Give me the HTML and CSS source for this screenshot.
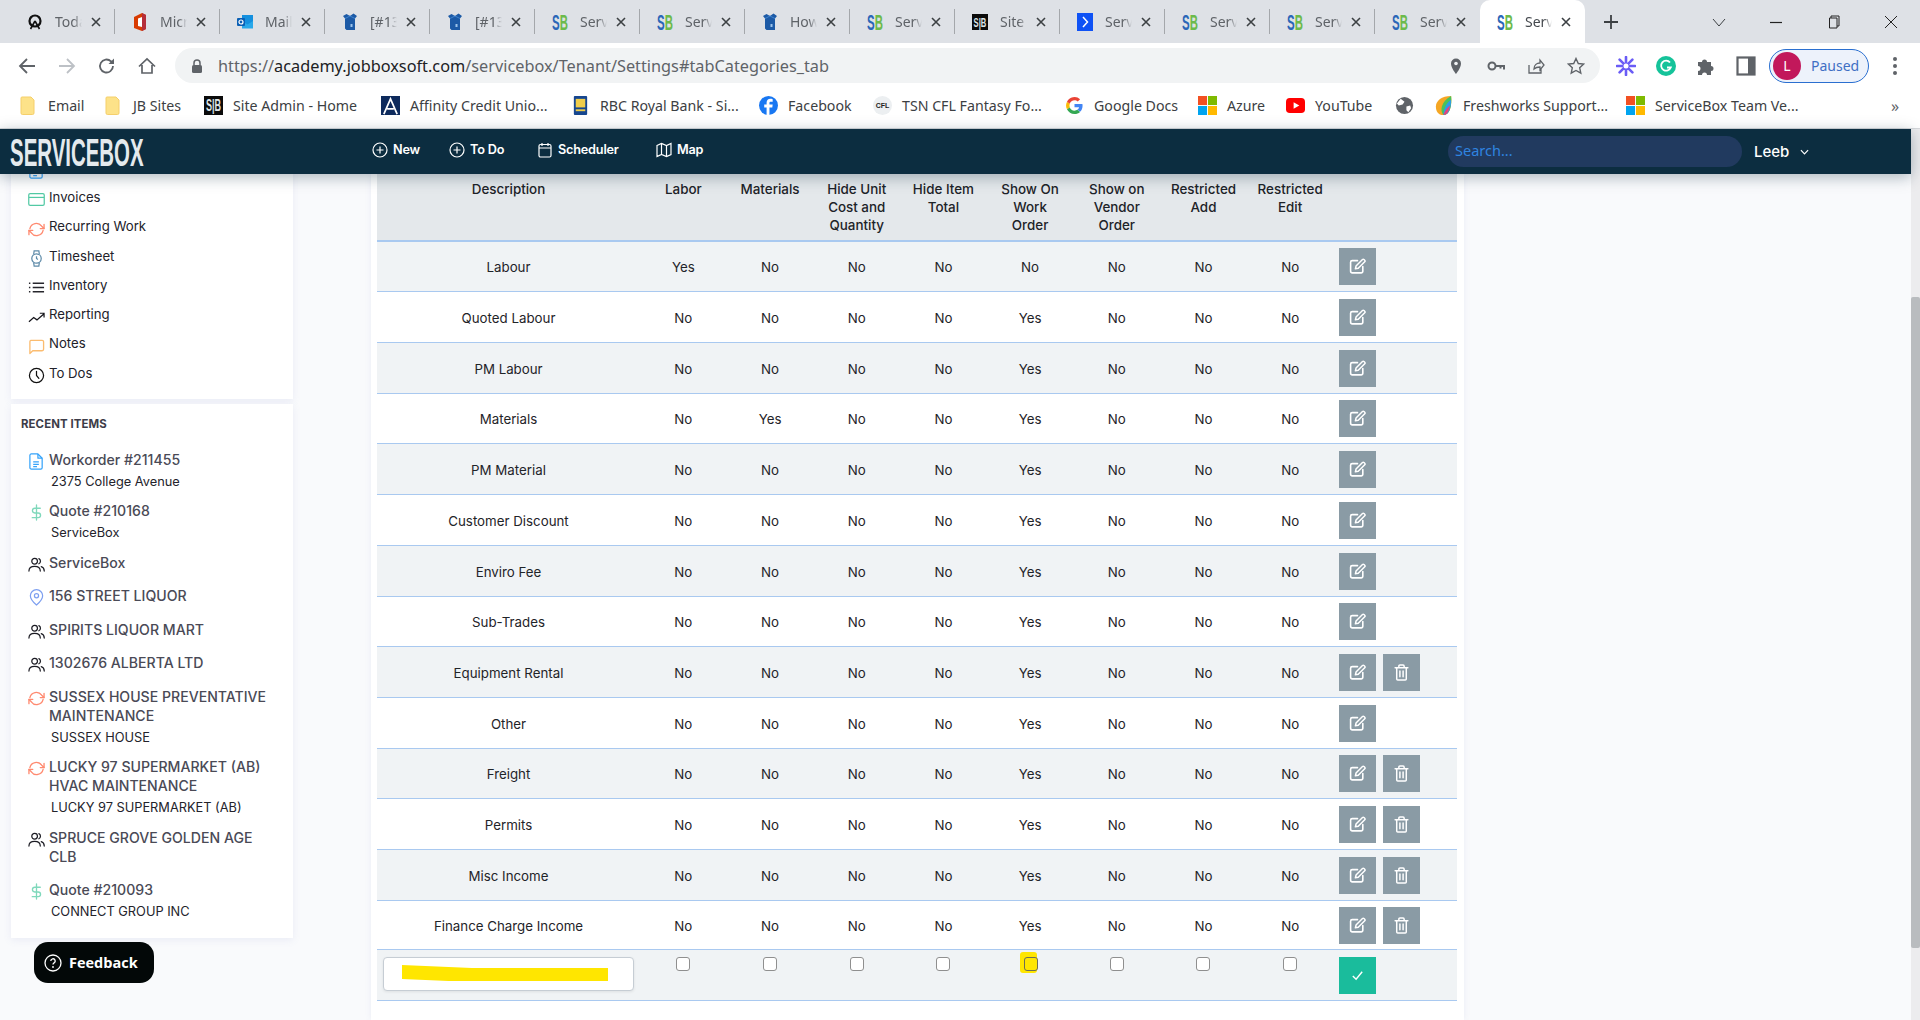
FILE: index.html
```html
<!DOCTYPE html>
<html lang="en">
<head>
<meta charset="utf-8">
<title>ServiceBox - Settings</title>
<link rel="stylesheet" href="styles.css">
</head>
<body>
<svg class="sprite" xmlns="http://www.w3.org/2000/svg">
  <symbol id="i-close" viewBox="0 0 10 10"><path d="M1 1l8 8M9 1l-8 8" fill="none" stroke="currentColor" stroke-width="1.6"/></symbol>
  <symbol id="i-box" viewBox="0 0 16 18"><path d="M1 3l3.500-2 3.500 2 3.500-2.500L15 3l-2 2.500V17H4.500L3 15.500V5.500z" fill="#1c5aa6"/><path d="M3 5.500L8 3l5 2.500" fill="none" stroke="#3f83cf"/><rect x="8.500" y="11" width="2" height="3" fill="#9cc3ea"/></symbol>
  <symbol id="i-edit" viewBox="0 0 16 16"><path d="M8 2.500H3a1.500 1.500 0 0 0-1.500 1.500v8.500A1.500 1.500 0 0 0 3 14h8.500a1.500 1.500 0 0 0 1.500-1.500V8" fill="none" stroke="currentColor" stroke-width="1.500" stroke-linecap="round"/><path d="M6 10.200l.6-2.600 6.100-6.100a1 1 0 0 1 1.400 0l.7.700a1 1 0 0 1 0 1.400L8.700 9.700z" fill="none" stroke="currentColor" stroke-width="1.400" stroke-linejoin="round"/></symbol>
  <symbol id="i-trash" viewBox="0 0 16 16"><path d="M2 3.500h12M5.500 3.500V2a1 1 0 0 1 1-1h3a1 1 0 0 1 1 1v1.500M3.500 3.500V14a1 1 0 0 0 1 1h7a1 1 0 0 0 1-1V3.500M6.500 6.500V12M9.500 6.500V12" fill="none" stroke="currentColor" stroke-width="1.400" stroke-linecap="round"/></symbol>
  <symbol id="i-users" viewBox="0 0 18 18"><g fill="none" stroke="#1c1c24" stroke-width="1.300" stroke-linecap="round"><circle cx="7" cy="5.500" r="3"/><path d="M1 16c0-3 2-5 6-5s6 2 6 5"/><path d="M11.500 2.800a3 3 0 0 1 0 5.400M14 11.300c2 .6 3.200 2.300 3.200 4.700"/></g></symbol>
  <symbol id="i-doc" viewBox="0 0 18 18"><g fill="none" stroke="#35a3fa" stroke-width="1.300" stroke-linejoin="round"><path d="M3.500 1h7l4.500 4.500V15.500a1.500 1.500 0 0 1-1.500 1.500h-10A1.500 1.500 0 0 1 2 15.500v-13A1.500 1.500 0 0 1 3.500 1z"/><path d="M10.500 1v4.500H15M5.500 9.500h6M5.500 12h6M5.500 14.500h4"/></g></symbol>
  <symbol id="i-dollar" viewBox="0 0 18 18"><path d="M9 1v16M13 4.500H7.200a2.500 2.500 0 0 0 0 5h3.600a2.500 2.500 0 0 1 0 5H4.500" fill="none" stroke="#7fd8bb" stroke-width="1.400" stroke-linecap="round"/></symbol>
  <symbol id="i-pin" viewBox="0 0 18 18"><path d="M9 17S2.500 11.500 2.500 7.200a6.500 6.500 0 0 1 13 0C15.500 11.500 9 17 9 17z" fill="none" stroke="#7d9ff0" stroke-width="1.300"/><circle cx="9" cy="7.200" r="2.200" fill="none" stroke="#7d9ff0" stroke-width="1.300"/></symbol>
  <symbol id="i-sync" viewBox="0 0 18 18"><g fill="none" stroke="#ff8a70" stroke-width="1.400" stroke-linecap="round" stroke-linejoin="round"><path d="M2 8a7 7 0 0 1 12.500-2.500L17 8"/><path d="M17 3.500V8h-4"/><path d="M16 10a7 7 0 0 1-12.500 2.500L1 10"/><path d="M1 14.500V10h4"/></g></symbol>
  <symbol id="i-card" viewBox="0 0 18 14"><rect x=".8" y=".8" width="16.400" height="12.400" rx="1.500" fill="none" stroke="#52c9a4" stroke-width="1.300"/><path d="M1 4.800h16" stroke="#52c9a4" stroke-width="1.300"/></symbol>
  <symbol id="i-watch" viewBox="0 0 18 18"><g fill="none" stroke="#5d8aa8" stroke-width="1.300"><circle cx="9" cy="9" r="5"/><path d="M6 4.500L6.500 1h5l.5 3.500M6 13.500L6.500 17h5l.5-3.500M9 6.500V9l1.500 1"/></g></symbol>
  <symbol id="i-list" viewBox="0 0 18 18"><path d="M5 4.500h12M5 9h12M5 13.500h12" stroke="#26262c" stroke-width="1.400"/><path d="M1 4.500h1.500M1 9h1.500M1 13.500h1.500" stroke="#26262c" stroke-width="1.400"/></symbol>
  <symbol id="i-trend" viewBox="0 0 18 18"><path d="M1 13.500l5-4.500 3.500 2.500L17 5M12.500 4.500H17V9" fill="none" stroke="#15151b" stroke-width="1.300"/></symbol>
  <symbol id="i-msg" viewBox="0 0 18 18"><path d="M3 2.500h12a1.500 1.500 0 0 1 1.500 1.500v8a1.500 1.500 0 0 1-1.500 1.500H5L2 16.500V4A1.500 1.500 0 0 1 3 2.500z" fill="none" stroke="#fbbc70" stroke-width="1.400" stroke-linejoin="round"/></symbol>
  <symbol id="i-clock" viewBox="0 0 18 18"><circle cx="9" cy="9" r="7.500" fill="none" stroke="#111" stroke-width="1.300"/><path d="M9 4.500V9l2.500 3" fill="none" stroke="#111" stroke-width="1.300" stroke-linecap="round"/></symbol>
  <symbol id="i-plusc" viewBox="0 0 16 16"><circle cx="8" cy="8" r="7" fill="none" stroke="#fff" stroke-width="1.200"/><path d="M8 4.500v7M4.500 8h7" stroke="#fff" stroke-width="1.200"/></symbol>
  <symbol id="i-folder" viewBox="0 0 16 20"><path d="M2 1h9l3 3v13a1.500 1.500 0 0 1-1.500 1.500h-10A1.500 1.500 0 0 1 1 17V2a1 1 0 0 1 1-1z" fill="#fde289" stroke="#f5cf6b"/></symbol>
  <symbol id="i-ms" viewBox="0 0 20 20"><rect width="9.500" height="9.500" fill="#f25022"/><rect x="10.500" width="9.500" height="9.500" fill="#7fba00"/><rect y="10.500" width="9.500" height="9.500" fill="#00a4ef"/><rect x="10.500" y="10.500" width="9.500" height="9.500" fill="#ffb900"/></symbol>
</svg>

<div class="app">
  <header class="browser">
    <div class="tabstrip">
      <div class="tab"><svg class="fav" viewBox="0 0 16 16"><circle cx="8" cy="7" r="5.500" fill="none" stroke="#111" stroke-width="2.200"/><path d="M8 7l-4.500 8M8 7l4.500 8" stroke="#111" stroke-width="1.600"/></svg><span class="tab-label">Today</span><svg class="tab-x"><use href="#i-close"/></svg></div>
      <div class="tab"><svg class="fav" viewBox="0 0 16 18"><path d="M2 4l8-4 4 2v14l-4 2-8-3z" fill="#d83b01"/><path d="M6 5.500l4-1.500v10l-4-1z" fill="#fff"/><path d="M10 0l4 2v14l-4 2z" fill="#b52e3a"/></svg><span class="tab-label">Microsoft</span><svg class="tab-x"><use href="#i-close"/></svg></div>
      <div class="tab"><svg class="fav" viewBox="0 0 16 16"><rect x="5" y="1" width="11" height="13" fill="#1490df"/><path d="M5 7l5.500 3.500L16 7v7.500H5z" fill="#28a8ea"/><rect y="4" width="8" height="8" rx="1" fill="#0a5fb4"/><circle cx="4" cy="8" r="2" fill="none" stroke="#fff" stroke-width="1.200"/></svg><span class="tab-label">Mail</span><svg class="tab-x"><use href="#i-close"/></svg></div>
      <div class="tab"><svg class="fav"><use href="#i-box"/></svg><span class="tab-label">[#1321</span><svg class="tab-x"><use href="#i-close"/></svg></div>
      <div class="tab"><svg class="fav"><use href="#i-box"/></svg><span class="tab-label">[#1321</span><svg class="tab-x"><use href="#i-close"/></svg></div>
      <div class="tab"><svg class="fav" viewBox="0 0 16 18"><text class="sb-text" x="0" y="17"><tspan class="sb-s">S</tspan><tspan class="sb-b">B</tspan></text></svg><span class="tab-label">ServiceBox</span><svg class="tab-x"><use href="#i-close"/></svg></div>
      <div class="tab"><svg class="fav" viewBox="0 0 16 18"><text class="sb-text" x="0" y="17"><tspan class="sb-s">S</tspan><tspan class="sb-b">B</tspan></text></svg><span class="tab-label">ServiceBox</span><svg class="tab-x"><use href="#i-close"/></svg></div>
      <div class="tab"><svg class="fav"><use href="#i-box"/></svg><span class="tab-label">How to</span><svg class="tab-x"><use href="#i-close"/></svg></div>
      <div class="tab"><svg class="fav" viewBox="0 0 16 18"><text class="sb-text" x="0" y="17"><tspan class="sb-s">S</tspan><tspan class="sb-b">B</tspan></text></svg><span class="tab-label">ServiceBox</span><svg class="tab-x"><use href="#i-close"/></svg></div>
      <div class="tab"><svg class="fav" viewBox="0 0 20 20"><rect width="20" height="20" fill="#0b0b0b"/><text class="sib-text" x="0" y="16">S|B</text></svg><span class="tab-label">Site Admin</span><svg class="tab-x"><use href="#i-close"/></svg></div>
      <div class="tab"><svg class="fav" viewBox="0 0 16 18"><rect width="16" height="18" fill="#0f52f5"/><path d="M6 4l4.500 5L6 14" fill="none" stroke="#fff" stroke-width="1.500"/></svg><span class="tab-label">ServiceBox</span><svg class="tab-x"><use href="#i-close"/></svg></div>
      <div class="tab"><svg class="fav" viewBox="0 0 16 18"><text class="sb-text" x="0" y="17"><tspan class="sb-s">S</tspan><tspan class="sb-b">B</tspan></text></svg><span class="tab-label">ServiceBox</span><svg class="tab-x"><use href="#i-close"/></svg></div>
      <div class="tab"><svg class="fav" viewBox="0 0 16 18"><text class="sb-text" x="0" y="17"><tspan class="sb-s">S</tspan><tspan class="sb-b">B</tspan></text></svg><span class="tab-label">ServiceBox</span><svg class="tab-x"><use href="#i-close"/></svg></div>
      <div class="tab no-sep"><svg class="fav" viewBox="0 0 16 18"><text class="sb-text" x="0" y="17"><tspan class="sb-s">S</tspan><tspan class="sb-b">B</tspan></text></svg><span class="tab-label">ServiceBox</span><svg class="tab-x"><use href="#i-close"/></svg></div>
      <div class="tab active"><svg class="fav" viewBox="0 0 16 18"><text class="sb-text" x="0" y="17"><tspan class="sb-s">S</tspan><tspan class="sb-b">B</tspan></text></svg><span class="tab-label">ServiceBox</span><svg class="tab-x"><use href="#i-close"/></svg></div>
      <svg class="newtab" viewBox="0 0 14 14"><path d="M7 0v14M0 7h14" stroke="#3c4043" stroke-width="1.800"/></svg>
      <div class="winctl">
        <span class="win"><svg class="win-ic" viewBox="0 0 14 14"><path d="M1 4l6 7 6-7" fill="none" stroke="#3c4043"/></svg></span>
        <span class="win"><svg class="win-ic" viewBox="0 0 14 14"><path d="M1 7.500h12" stroke="#222" stroke-width="1.200"/></svg></span>
        <span class="win"><svg class="win-ic" viewBox="0 0 14 14"><path d="M4 3V1h8v10h-2M2.500 3h7.500v10H2.500z" fill="none" stroke="#222"/></svg></span>
        <span class="win"><svg class="win-ic" viewBox="0 0 14 14"><path d="M1 1l12 12M13 1L1 13" stroke="#222"/></svg></span>
      </div>
    </div>

    <div class="toolbar">
      <span class="tb-btn"><svg class="tb-ic" viewBox="0 0 18 18"><path d="M17 9H2M9 2L2 9l7 7" fill="none" stroke="#5f6368" stroke-width="1.800"/></svg></span>
      <span class="tb-btn"><svg class="tb-ic" viewBox="0 0 18 18"><path d="M1 9h15M9 2l7 7-7 7" fill="none" stroke="#bdc1c6" stroke-width="1.800"/></svg></span>
      <span class="tb-btn"><svg class="tb-ic" viewBox="0 0 18 18"><path d="M15 9a6.500 6.500 0 1 1-2-4.700L15 6" fill="none" stroke="#5f6368" stroke-width="1.800"/><path d="M16 1.500V7h-5.500z" fill="#5f6368"/></svg></span>
      <span class="tb-btn"><svg class="tb-ic" viewBox="0 0 18 18"><path d="M1 9.500L9 2l8 7.500M4 8v8h10V8" fill="none" stroke="#5f6368" stroke-width="1.700"/></svg></span>
      <div class="omnibox">
        <svg class="lock" viewBox="0 0 12 14"><path d="M3 6V4a3 3 0 0 1 6 0v2" fill="none" stroke="#5f6368" stroke-width="1.500"/><rect x="1" y="6" width="10" height="8" rx="1.500" fill="#5f6368"/></svg>
        <span class="url"><span class="url-dim">https://</span>academy.jobboxsoft.com<span class="url-dim">/servicebox/Tenant/Settings#tabCategories_tab</span></span>
        <div class="omni-right">
          <span class="tb-btn"><svg class="tb-ic" viewBox="0 0 18 18"><path d="M9 17S4 11 4 6.500a5 5 0 0 1 10 0C14 11 9 17 9 17z" fill="#5f6368"/><circle cx="9" cy="6.500" r="1.800" fill="#f1f3f4"/></svg></span>
          <span class="tb-btn"><svg class="tb-ic" viewBox="0 0 18 18"><circle cx="5" cy="9" r="3.500" fill="none" stroke="#5f6368" stroke-width="2"/><path d="M8.500 9H17v3.500M13.500 9v2.500" fill="none" stroke="#5f6368" stroke-width="2"/></svg></span>
          <span class="tb-btn"><svg class="tb-ic" viewBox="0 0 18 18"><path d="M2 8v8h12v-4M7 12c0-4 3-6 6-6V3l4 5-4 5v-3c-3 0-5 1-6 2z" fill="none" stroke="#5f6368" stroke-width="1.300"/></svg></span>
          <span class="tb-btn"><svg class="tb-ic" viewBox="0 0 18 18"><path d="M9 1.500l2.300 5 5.400.6-4 3.700 1.100 5.400L9 13.500l-4.800 2.700 1.100-5.400-4-3.700 5.400-.6z" fill="none" stroke="#5f6368" stroke-width="1.400"/></svg></span>
        </div>
      </div>
      <div class="exts">
        <span class="tb-btn"><svg class="ext-ic" viewBox="0 0 20 20"><g stroke="#6a5cf6" stroke-width="2.600" stroke-linecap="round"><path d="M10 1v18M1 10h18M3.600 3.600l12.800 12.800M16.400 3.600L3.600 16.400"/></g><circle cx="10" cy="10" r="2.500" fill="#fff"/></svg></span>
        <span class="tb-btn"><svg class="ext-ic" viewBox="0 0 20 20"><circle cx="10" cy="10" r="10" fill="#15c39a"/><path d="M14 6.500a5 5 0 1 0 .8 5H11" fill="none" stroke="#fff" stroke-width="1.800"/></svg></span>
        <span class="tb-btn"><svg class="ext-ic" viewBox="0 0 20 20"><path d="M2 6h4a2.500 2.500 0 0 1 5 0h4v4a2.500 2.500 0 0 1 0 5v4h-4a2.500 2.500 0 0 0-5 0H2v-4a2.500 2.500 0 0 0 0-5z" fill="#5f6368"/></svg></span>
        <span class="tb-btn"><svg class="ext-ic" viewBox="0 0 20 20"><rect x="1.500" y="1.500" width="17" height="17" fill="#fff" stroke="#5f6368" stroke-width="2.200"/><rect x="12" y="1.500" width="6.500" height="17" fill="#5f6368"/></svg></span>
      </div>
      <div class="profile"><span class="avatar">L</span><span class="paused">Paused</span></div>
      <span class="menu-dots"><i class="dot"></i><i class="dot"></i><i class="dot"></i></span>
    </div>

    <div class="bookmarks">
      <span class="bm"><svg class="bm-ic folder"><use href="#i-folder"/></svg>Email</span>
      <span class="bm"><svg class="bm-ic folder"><use href="#i-folder"/></svg>JB Sites</span>
      <span class="bm"><svg class="bm-ic" viewBox="0 0 20 20"><rect width="20" height="20" fill="#0b0b0b"/><text class="sib-text" x="0" y="16">S|B</text></svg>Site Admin - Home</span>
      <span class="bm"><svg class="bm-ic" viewBox="0 0 20 20"><rect width="20" height="20" fill="#0d2a5c"/><path d="M3 19L10 3l7 16M6.500 13.500h7" fill="none" stroke="#fff" stroke-width="1.800"/></svg>Affinity Credit Unio...</span>
      <span class="bm"><svg class="bm-ic" viewBox="0 0 20 20"><rect x="3" y="0" width="14" height="20" rx="1" fill="#16468f"/><rect x="5" y="3" width="10" height="9" fill="#f0cd4a"/><path d="M5 15h10" stroke="#f0cd4a" stroke-width="2"/></svg>RBC Royal Bank - Si...</span>
      <span class="bm"><svg class="bm-ic" viewBox="0 0 20 20"><circle cx="10" cy="10" r="10" fill="#1877f2"/><path d="M11 20v-8h3l.4-3H11V7.500c0-1 .4-1.500 1.600-1.500h1.800V3.300C13.500 3.100 12.800 3 12 3 9.600 3 8 4.500 8 7v2H5.500v3H8v8z" fill="#fff"/></svg>Facebook</span>
      <span class="bm"><span class="bm-ic bm-cfl">CFL</span>TSN CFL Fantasy Fo...</span>
      <span class="bm"><svg class="bm-ic" viewBox="0 0 20 20"><path d="M18.500 10.200c0-.7-.1-1.300-.2-1.800H10v3.400h4.800a4 4 0 0 1-1.800 2.700l2.800 2.200c1.700-1.500 2.700-3.800 2.700-6.500z" fill="#4285f4"/><path d="M10 19c2.400 0 4.400-.8 5.800-2.200L13 14.600c-.8.500-1.800.9-3 .9-2.300 0-4.300-1.600-5-3.700L2.100 14A9 9 0 0 0 10 19z" fill="#34a853"/><path d="M5 11.800a5.400 5.400 0 0 1 0-3.600L2.100 6a9 9 0 0 0 0 8z" fill="#fbbc05"/><path d="M10 4.500c1.300 0 2.500.5 3.400 1.300l2.500-2.500A9 9 0 0 0 2.100 6L5 8.200c.7-2.100 2.700-3.700 5-3.700z" fill="#ea4335"/></svg>Google Docs</span>
      <span class="bm"><svg class="bm-ic"><use href="#i-ms"/></svg>Azure</span>
      <span class="bm"><svg class="bm-ic" viewBox="0 0 20 20"><rect y="2" width="20" height="16" rx="4" fill="#f00"/><path d="M8 6.500v7l6-3.500z" fill="#fff"/></svg>YouTube</span>
      <span class="bm"><svg class="bm-ic" viewBox="0 0 20 20"><circle cx="10" cy="10" r="9" fill="#5f6368"/><path d="M6 3l4 3-2 3-4 1-2-2zM12 11l4-1 1 3-3 4-2-2z" fill="#fff"/></svg></span>
      <span class="bm"><svg class="bm-ic" viewBox="0 0 20 20"><path d="M10 20C4 20 2 16 2 11 2 5 8 0 18 0c1 9-1 20-8 20z" fill="#f5a623"/><path d="M10 20C6 16 7 6 18 0c1 9-1 20-8 20z" fill="#49c25b"/><path d="M10 20c0-6 3-13 8-16 0 8-2 16-8 16z" fill="#2d9ce8"/><path d="M10 20c1-4 4-8 7-10-1 5-3 10-7 10z" fill="#e8437a"/></svg>Freshworks Support...</span>
      <span class="bm"><svg class="bm-ic"><use href="#i-ms"/></svg>ServiceBox Team Ve...</span>
      <span class="bm-more">»</span>
    </div>
  </header>

  <div class="site">
    <div class="viewport">
      <nav class="navbar">
        <svg class="logo" viewBox="0 0 136 30"><text class="logo-text" x="0" y="29">SERVICEBOX</text></svg>
        <div class="nav-links">
          <a class="nav-link"><svg class="nav-ic"><use href="#i-plusc"/></svg>New</a>
          <a class="nav-link"><svg class="nav-ic"><use href="#i-plusc"/></svg>To Do</a>
          <a class="nav-link"><svg class="nav-ic" viewBox="0 0 16 16"><rect x="2" y="2.500" width="12" height="12.500" rx="1.500" fill="none" stroke="#fff" stroke-width="1.200"/><path d="M2 6h12M5 1v3M11 1v3" stroke="#fff" stroke-width="1.200"/></svg>Scheduler</a>
          <a class="nav-link"><svg class="nav-ic" viewBox="0 0 16 16"><path d="M1 3.500l4.500-2 5 2 4.500-2v11l-4.500 2-5-2-4.500 2zM5.500 1.500v11M10.500 3.500v11" fill="none" stroke="#fff" stroke-width="1.200"/></svg>Map</a>
        </div>
        <div class="nav-search">Search...</div>
        <div class="nav-user">Leeb<svg class="nav-chev" viewBox="0 0 10 6"><path d="M1 1l4 4 4-4" fill="none" stroke="#fff" stroke-width="1.300"/></svg></div>
      </nav>

      <div class="content">
        <aside class="sidebar">
          <div class="side-card nav-card">
            <div class="side-nav"><svg class="ic"><use href="#i-doc"/></svg>Work Orders</div>
            <div class="side-nav"><svg class="ic"><use href="#i-card"/></svg>Invoices</div>
            <div class="side-nav"><svg class="ic"><use href="#i-sync"/></svg>Recurring Work</div>
            <div class="side-nav"><svg class="ic"><use href="#i-watch"/></svg>Timesheet</div>
            <div class="side-nav"><svg class="ic"><use href="#i-list"/></svg>Inventory</div>
            <div class="side-nav"><svg class="ic"><use href="#i-trend"/></svg>Reporting</div>
            <div class="side-nav"><svg class="ic"><use href="#i-msg"/></svg>Notes</div>
            <div class="side-nav"><svg class="ic"><use href="#i-clock"/></svg>To Dos</div>
          </div>
          <div class="side-card recent-card">
            <h4 class="recent-title">RECENT ITEMS</h4>
            <div class="ri has-sub"><svg class="ic"><use href="#i-doc"/></svg><div class="ri-body"><div class="ri-name">Workorder #211455</div><div class="ri-sub">2375 College Avenue</div></div></div>
            <div class="ri has-sub"><svg class="ic"><use href="#i-dollar"/></svg><div class="ri-body"><div class="ri-name">Quote #210168</div><div class="ri-sub">ServiceBox</div></div></div>
            <div class="ri"><svg class="ic"><use href="#i-users"/></svg><div class="ri-body"><div class="ri-name">ServiceBox</div></div></div>
            <div class="ri"><svg class="ic"><use href="#i-pin"/></svg><div class="ri-body"><div class="ri-name">156 STREET LIQUOR</div></div></div>
            <div class="ri"><svg class="ic"><use href="#i-users"/></svg><div class="ri-body"><div class="ri-name">SPIRITS LIQUOR MART</div></div></div>
            <div class="ri"><svg class="ic"><use href="#i-users"/></svg><div class="ri-body"><div class="ri-name">1302676 ALBERTA LTD</div></div></div>
            <div class="ri has-sub"><svg class="ic"><use href="#i-sync"/></svg><div class="ri-body"><div class="ri-name">SUSSEX HOUSE PREVENTATIVE MAINTENANCE</div><div class="ri-sub">SUSSEX HOUSE</div></div></div>
            <div class="ri has-sub"><svg class="ic"><use href="#i-sync"/></svg><div class="ri-body"><div class="ri-name">LUCKY 97 SUPERMARKET (AB) HVAC MAINTENANCE</div><div class="ri-sub">LUCKY 97 SUPERMARKET (AB)</div></div></div>
            <div class="ri"><svg class="ic"><use href="#i-users"/></svg><div class="ri-body"><div class="ri-name">SPRUCE GROVE GOLDEN AGE CLB</div></div></div>
            <div class="ri has-sub"><svg class="ic"><use href="#i-dollar"/></svg><div class="ri-body"><div class="ri-name">Quote #210093</div><div class="ri-sub">CONNECT GROUP INC</div></div></div>
          </div>
          <button class="feedback"><svg class="fb-ic" viewBox="0 0 18 18"><circle cx="9" cy="9" r="8" fill="none" stroke="#fff" stroke-width="1.300"/><path d="M6.800 7a2.200 2.200 0 1 1 3.300 1.900c-.7.400-1.100.9-1.100 1.700" fill="none" stroke="#fff" stroke-width="1.300"/><circle cx="9" cy="13" r=".9" fill="#fff"/></svg>Feedback</button>
        </aside>

        <main class="main-card">
          <table class="cat-table">
            <colgroup><col class="c-desc"><col class="c-flag"><col class="c-flag"><col class="c-flag"><col class="c-flag"><col class="c-flag"><col class="c-flag"><col class="c-flag"><col class="c-flag"><col class="c-act"></colgroup>
            <thead>
              <tr><th>Description</th><th>Labor</th><th>Materials</th><th>Hide Unit<br>Cost and<br>Quantity</th><th>Hide Item<br>Total</th><th>Show On<br>Work<br>Order</th><th>Show on<br>Vendor<br>Order</th><th>Restricted<br>Add</th><th>Restricted<br>Edit</th><th></th></tr>
            </thead>
            <tbody>
              <tr class="short"><td>Labour</td><td>Yes</td><td>No</td><td>No</td><td>No</td><td>No</td><td>No</td><td>No</td><td>No</td><td class="act"><span class="btn"><svg class="btn-ic"><use href="#i-edit"/></svg></span></td></tr>
              <tr><td>Quoted Labour</td><td>No</td><td>No</td><td>No</td><td>No</td><td>Yes</td><td>No</td><td>No</td><td>No</td><td class="act"><span class="btn"><svg class="btn-ic"><use href="#i-edit"/></svg></span></td></tr>
              <tr><td>PM Labour</td><td>No</td><td>No</td><td>No</td><td>No</td><td>Yes</td><td>No</td><td>No</td><td>No</td><td class="act"><span class="btn"><svg class="btn-ic"><use href="#i-edit"/></svg></span></td></tr>
              <tr class="short"><td>Materials</td><td>No</td><td>Yes</td><td>No</td><td>No</td><td>Yes</td><td>No</td><td>No</td><td>No</td><td class="act"><span class="btn"><svg class="btn-ic"><use href="#i-edit"/></svg></span></td></tr>
              <tr><td>PM Material</td><td>No</td><td>No</td><td>No</td><td>No</td><td>Yes</td><td>No</td><td>No</td><td>No</td><td class="act"><span class="btn"><svg class="btn-ic"><use href="#i-edit"/></svg></span></td></tr>
              <tr><td>Customer Discount</td><td>No</td><td>No</td><td>No</td><td>No</td><td>Yes</td><td>No</td><td>No</td><td>No</td><td class="act"><span class="btn"><svg class="btn-ic"><use href="#i-edit"/></svg></span></td></tr>
              <tr><td>Enviro Fee</td><td>No</td><td>No</td><td>No</td><td>No</td><td>Yes</td><td>No</td><td>No</td><td>No</td><td class="act"><span class="btn"><svg class="btn-ic"><use href="#i-edit"/></svg></span></td></tr>
              <tr class="short"><td>Sub-Trades</td><td>No</td><td>No</td><td>No</td><td>No</td><td>Yes</td><td>No</td><td>No</td><td>No</td><td class="act"><span class="btn"><svg class="btn-ic"><use href="#i-edit"/></svg></span></td></tr>
              <tr><td>Equipment Rental</td><td>No</td><td>No</td><td>No</td><td>No</td><td>Yes</td><td>No</td><td>No</td><td>No</td><td class="act"><span class="btn"><svg class="btn-ic"><use href="#i-edit"/></svg></span><span class="btn"><svg class="btn-ic"><use href="#i-trash"/></svg></span></td></tr>
              <tr><td>Other</td><td>No</td><td>No</td><td>No</td><td>No</td><td>Yes</td><td>No</td><td>No</td><td>No</td><td class="act"><span class="btn"><svg class="btn-ic"><use href="#i-edit"/></svg></span></td></tr>
              <tr class="short"><td>Freight</td><td>No</td><td>No</td><td>No</td><td>No</td><td>Yes</td><td>No</td><td>No</td><td>No</td><td class="act"><span class="btn"><svg class="btn-ic"><use href="#i-edit"/></svg></span><span class="btn"><svg class="btn-ic"><use href="#i-trash"/></svg></span></td></tr>
              <tr><td>Permits</td><td>No</td><td>No</td><td>No</td><td>No</td><td>Yes</td><td>No</td><td>No</td><td>No</td><td class="act"><span class="btn"><svg class="btn-ic"><use href="#i-edit"/></svg></span><span class="btn"><svg class="btn-ic"><use href="#i-trash"/></svg></span></td></tr>
              <tr><td>Misc Income</td><td>No</td><td>No</td><td>No</td><td>No</td><td>Yes</td><td>No</td><td>No</td><td>No</td><td class="act"><span class="btn"><svg class="btn-ic"><use href="#i-edit"/></svg></span><span class="btn"><svg class="btn-ic"><use href="#i-trash"/></svg></span></td></tr>
              <tr class="shorter"><td>Finance Charge Income</td><td>No</td><td>No</td><td>No</td><td>No</td><td>Yes</td><td>No</td><td>No</td><td>No</td><td class="act"><span class="btn"><svg class="btn-ic"><use href="#i-edit"/></svg></span><span class="btn"><svg class="btn-ic"><use href="#i-trash"/></svg></span></td></tr>
              <tr class="new-row">
                <td><div class="desc-input"><svg class="scribble" viewBox="0 0 206 16" preserveAspectRatio="none"><path d="M0 0l70 3 136 0v15L70 17 0 14z" fill="#ffe600"/></svg></div></td>
                <td><input class="chk" type="checkbox"></td><td><input class="chk" type="checkbox"></td><td><input class="chk" type="checkbox"></td><td><input class="chk" type="checkbox"></td>
                <td><span class="mark"><input class="chk chk-marked" type="checkbox"></span></td>
                <td><input class="chk" type="checkbox"></td><td><input class="chk" type="checkbox"></td><td><input class="chk" type="checkbox"></td>
                <td class="act"><span class="btn btn-ok"><svg class="btn-ic ok-ic" viewBox="0 0 16 16"><path d="M3 8.500l3.500 3.500L13 4" fill="none" stroke="#fff" stroke-width="1.500"/></svg></span></td>
              </tr>
            </tbody>
          </table>
        </main>
      </div>
    </div>
    <div class="scrollbar"><div class="thumb"></div></div>
  </div>
</div>
</body>
</html>
```

FILE: styles.css
```css
* { box-sizing: border-box; }
html, body { margin: 0; padding: 0; height: 100%; overflow: hidden; }
body { font-family: "Noto Sans", "Open Sans", sans-serif; color: #212529; background: #fff; }
.sprite { display: none; }
.app { width: 1920px; height: 1020px; display: flex; flex-direction: column; overflow: hidden; }

/* Browser chrome */
.browser { flex: 0 0 129px; background: #fff; border-bottom: 1px solid #d6d8db; display: flex; flex-direction: column; }
.tabstrip { height: 43px; background: #dee1e6; display: flex; align-items: center; padding-left: 10px; flex: none; }
.tab { position: relative; width: 105px; height: 43px; display: flex; align-items: center; padding-left: 17px; flex: none; font-size: 14px; color: #5f6368; }
.tab::after { content: ""; position: absolute; right: 0; top: 9px; height: 25px; width: 1px; background: #a4a7ab; }
.tab.no-sep::after, .tab.active::after { display: none; }
.tab.active { background: #fff; border-radius: 10px 10px 0 0; color: #45494e; }
.fav { width: 16px; height: 18px; flex: none; }
.tab-label { width: 27px; margin-left: 12px; overflow: hidden; white-space: nowrap; -webkit-mask-image: linear-gradient(90deg, #000 70%, transparent); mask-image: linear-gradient(90deg, #000 70%, transparent); }
.tab-x { width: 10px; height: 10px; margin-left: 9px; color: #3c4043; flex: none; }
.sb-text { font: 700 22px "Liberation Sans", sans-serif; transform: scaleX(.52); }
.sb-s { fill: #2a66b8; }
.sb-b { fill: #6cba4b; }
.sib-text { font: 700 17px "Liberation Sans", sans-serif; fill: #dfe5e8; transform: translateX(2px) scaleX(.56); }
.newtab { width: 14px; height: 14px; margin-left: 19px; flex: none; }
.winctl { margin-left: auto; display: flex; }
.win { width: 57.5px; display: flex; justify-content: center; }
.win-ic { width: 14px; height: 14px; }

.toolbar { height: 43px; display: flex; align-items: center; padding: 5px 0 3px 7px; flex: none; }
.tb-btn { width: 40px; height: 34px; display: flex; align-items: center; justify-content: center; flex: none; }
.tb-ic { width: 18px; height: 18px; }
.omnibox { margin-left: 8px; width: 1425px; height: 35px; background: #f1f3f4; border-radius: 18px; display: flex; align-items: center; padding-left: 15px; }
.lock { width: 12px; height: 14px; flex: none; margin-left: 1px; }
.url { margin-left: 15px; font-size: 16.3px; color: #202124; white-space: nowrap; }
.url-dim { color: #5f6368; }
.omni-right { margin-left: auto; display: flex; padding-right: 4px; }
.exts { display: flex; margin-left: 6px; }
.ext-ic { width: 20px; height: 20px; }
.profile { margin-left: 3px; width: 100px; height: 34px; border: 1.5px solid #2a6fd0; border-radius: 17px; background: #edf2fb; display: flex; align-items: center; flex: none; padding-left: 3px; }
.avatar { width: 28px; height: 28px; border-radius: 50%; background: #c2185b; color: #fff; font-size: 14px; display: flex; align-items: center; justify-content: center; }
.paused { margin-left: 10px; font-size: 14px; color: #3f6fc4; }
.menu-dots { width: 51px; display: flex; flex-direction: column; align-items: center; gap: 3px; }
.dot { width: 4px; height: 4px; border-radius: 50%; background: #5f6368; }

.bookmarks { height: 42px; display: grid; grid-template-columns: 85px 99px 177px 190px 188px 114px 192px 133px 88px 109px 39px 192px 265px 1fr; padding: 0 0 3px 20px; align-items: center; font-size: 14.2px; color: #3c4043; flex: none; }
.bm { display: flex; align-items: center; gap: 10px; white-space: nowrap; }
.bm-ic { width: 19px; height: 19px; flex: none; }
.folder { width: 16px; height: 20px; margin-right: 2px; }
.bm-cfl { background: #eceff1; border-radius: 50%; color: #222; font: 700 7px/19px "Liberation Sans", sans-serif; text-align: center; }
.bm-more { font-size: 16px; color: #5f6368; }

/* Site */
.site { flex: 1; display: flex; min-height: 0; }
.viewport { flex: 1; min-width: 0; display: flex; flex-direction: column; background: #f9fafc; }
.scrollbar { width: 9px; background: #ececee; flex: none; padding-top: 168px; }
.thumb { height: 651px; background: #b9bcbf; border-radius: 2px; }

.navbar { position: relative; z-index: 5; height: 45px; flex: none; background: #0c2d40; display: flex; align-items: center; box-shadow: 0 3px 14px rgba(20, 50, 70, .35); color: #fff; }
.logo { width: 136px; height: 30px; margin-left: 10px; flex: none; }
.logo-text { font: 700 39px "Liberation Sans", sans-serif; fill: #e4eaee; transform: scaleX(.524); }
.nav-links { display: grid; grid-template-columns: 77px 88px 119px 60px; margin-left: 226px; padding-bottom: 4px; }
.nav-link { display: flex; align-items: center; gap: 5px; font: 600 12.7px "Inter", sans-serif; letter-spacing: -.2px; white-space: nowrap; }
.nav-ic { width: 16px; height: 16px; flex: none; }
.nav-search { margin-left: 732px; width: 294px; height: 31px; border-radius: 16px; background: #213a5f; color: #2f84e0; font-size: 14.5px; line-height: 29px; padding-left: 7px; flex: none; }
.nav-user { margin-left: 12px; font: 500 15px "Inter", sans-serif; display: flex; align-items: center; gap: 11px; }
.nav-chev { width: 9px; height: 6px; }

.content { flex: 1; min-height: 0; display: flex; overflow: hidden; }
.sidebar { width: 293px; padding-left: 11px; flex: none; margin-top: -24px; font-family: "Inter", sans-serif; }
.side-card { background: #fff; box-shadow: 0 2px 8px rgba(110, 120, 190, .11); }
.nav-card { padding: 3px 0 12px 17px; margin-bottom: 5px; }
.side-nav { height: 29.3px; display: flex; align-items: center; font-size: 13.2px; color: #22222a; }
.ic { width: 17px; height: 17px; flex: none; margin-right: 4px; position: relative; top: 3px; }
.recent-card { padding: 14px 0 6.5px 10px; }
.recent-title { margin: 0 0 19.5px; font-size: 11.4px; line-height: 12px; font-weight: 700; color: #3c3c48; letter-spacing: .1px; }
.ri { display: flex; padding: 0 19px 14.5px 7px; }
.ri.has-sub { padding-bottom: 10.5px; }
.ri-name { font-size: 14.1px; line-height: 19px; font-weight: 500; color: #4a4a56; }
.ri-sub { margin: 3px 0 0 2px; font-size: 12.8px; line-height: 19px; color: #23232b; white-space: nowrap; }
.ri-body { min-width: 0; flex: 1; }
.feedback { margin: 4px 0 0 23px; width: 120px; height: 41px; border: 0; border-radius: 14px; background: #030808; color: #fff; font: 700 14.5px "Open Sans", sans-serif; display: flex; align-items: center; gap: 7px; padding: 0 0 0 10px; }
.fb-ic { width: 18px; height: 18px; flex: none; }

.main-card { margin-left: 78px; width: 1093px; background: #fff; padding: 0 7px 0 6px; flex: none; box-shadow: 0 0 6px rgba(110, 120, 190, .1); font-family: "Inter", sans-serif; }
.cat-table { width: 1080px; table-layout: fixed; border-collapse: separate; border-spacing: 0; font-size: 13.3px; }
.c-desc { width: 263px; }
.c-flag { width: 86.7px; }
.cat-table th { background: #e4e8eb; height: 68px; vertical-align: top; padding: 6px 0 0; font-size: 13.4px; font-weight: 500; line-height: 18px; color: #1d2328; border-bottom: 2px solid #a9c9f0; text-align: center; }
.cat-table td { height: 51px; padding: 1px 0 0; text-align: center; color: #1f2429; border-bottom: 1px solid #a9c9f0; }
.cat-table tr.short td { height: 50px; }
.cat-table tr.shorter td { height: 49px; }
.cat-table tbody tr:nth-child(odd) td { background: #f0f3f5; }
.cat-table td.act { text-align: left; padding: 0 0 0 5px; white-space: nowrap; font-size: 0; }
.btn { display: inline-flex; align-items: center; justify-content: center; width: 37px; height: 37px; background: #8a9ba5; color: #fff; margin-right: 7px; vertical-align: middle; }
.btn-ic { width: 17px; height: 17px; }
.btn-ok { background: #1abc9c; }
.ok-ic { width: 15px; height: 15px; }
.new-row td, .cat-table .new-row td.act { vertical-align: top; padding-top: 7px; }
.desc-input { margin-left: 6px; width: 251px; height: 34px; border: 1px solid #c6cdd4; border-radius: 4px; background: #fff; box-shadow: 0 1px 3px rgba(0, 0, 0, .08); padding: 7px 0 0 18px; }
.scribble { width: 206px; height: 16px; display: block; }
.chk { appearance: none; -webkit-appearance: none; width: 14px; height: 14px; margin: 0; border: 1.5px solid #8f8f8f; border-radius: 3px; background: #fff; display: inline-block; vertical-align: top; }
.mark { display: inline-block; width: 17px; height: 21px; background: #ffe600; border-radius: 3px; vertical-align: top; margin: -5px 3px 0 0; text-align: right; padding-top: 5px; }
.chk-marked { background: #ffe600; border-color: #6e6e55; margin: 0 -1px 0 0; }
```
